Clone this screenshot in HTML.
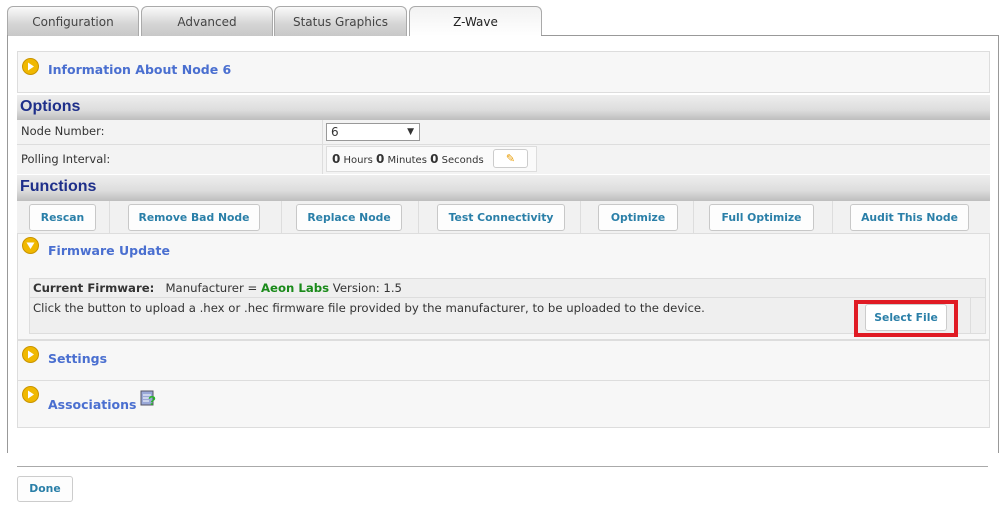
<!DOCTYPE html>
<html><head><style>
body{margin:0;width:1006px;height:512px;background:#fff;font-family:"DejaVu Sans","Liberation Sans",sans-serif;font-size:11.5px;color:#333;position:relative;overflow:hidden}
.a{position:absolute;box-sizing:border-box}
.tab{position:absolute;top:6px;height:30px;border:1px solid #aaa;border-bottom:none;border-radius:6px 6px 0 0;background:linear-gradient(#fafafa,#d4d4d4 60%,#c8c8c8);text-align:center;line-height:30px;font-size:12px;color:#444;box-sizing:border-box}
.hdr{position:absolute;left:17px;width:973px;background:linear-gradient(#eee,#ddd 60%,#bdbdbd);color:#1e2f8a;font-weight:bold;font-size:16px;font-family:"Liberation Sans",sans-serif;padding-left:3px;box-sizing:border-box}
.btn{position:absolute;top:204px;height:27px;border:1px solid #c8c8c8;border-radius:3px;background:#fdfdfd;color:#2a7fa8;font-weight:bold;text-align:center;line-height:25px;box-sizing:border-box;font-size:10.8px}
.sec{position:absolute;left:17px;width:973px;background:#f7f7f7;border:1px solid #ddd;box-sizing:border-box}
.ttl{position:absolute;left:30px;color:#4a6fd0;font-weight:bold;font-size:12.5px}
.ic{position:absolute;left:4px;width:17px;height:17px;border-radius:50%;background:#f0b800;border:1px solid #c99400;box-sizing:border-box}
</style></head><body>
<div class="tab" style="left:7px;width:132px">Configuration</div>
<div class="tab" style="left:141px;width:132px">Advanced</div>
<div class="tab" style="left:274px;width:133px">Status Graphics</div>
<div class="tab" style="left:409px;width:133px;background:linear-gradient(#f2f2f2,#fff);height:30px;color:#222">Z-Wave</div>
<div class="a" style="left:541px;top:35px;width:458px;height:1px;background:#999"></div>
<div class="a" style="left:7px;top:35px;width:1px;height:418px;background:#999"></div>
<div class="a" style="left:998px;top:35px;width:1px;height:418px;background:#999"></div>

<div class="sec" style="top:51px;height:42px"><div class="ic" style="top:6px"><svg width="15" height="15"><path d="M5 3.5L11 7.5 5 11.5z" fill="#fff"/></svg></div><div class="ttl" style="top:10px">Information About Node 6</div></div>

<div class="hdr" style="top:95px;height:25px;line-height:23px">Options</div>
<div class="a" style="left:17px;top:120px;width:973px;height:25px;background:#f3f3f3;border-bottom:1px solid #ddd"></div>
<div class="a" style="left:17px;top:145px;width:973px;height:29px;background:#f3f3f3"></div>
<div class="a" style="left:21px;top:124px">Node Number:</div>
<div class="a" style="left:21px;top:152px">Polling Interval:</div>
<div class="a" style="left:322px;top:120px;width:1px;height:54px;background:#ddd"></div>
<div class="a" style="left:326px;top:123px;width:94px;height:18px;border:1px solid #999;background:#fff;padding-left:4px;font-size:12px;line-height:16px">6<span style="position:absolute;right:5px;font-size:9px">▼</span></div>
<div class="a" style="left:326px;top:146px;width:211px;height:26px;border:1px solid #ddd;background:#fafafa;font-size:10px;line-height:24px;padding-left:5px"><b style="font-size:12px">0</b> Hours <b style="font-size:12px">0</b> Minutes <b style="font-size:12px">0</b> Seconds</div>
<div class="a" style="left:493px;top:149px;width:35px;height:19px;border:1px solid #ccc;border-radius:3px;background:#fff;color:#e89b00;text-align:center;font-size:11px;line-height:17px">✎</div>

<div class="hdr" style="top:175px;height:26px;line-height:23px">Functions</div>
<div class="a" style="left:17px;top:201px;width:973px;height:33px;background:#f1f1f1;border-bottom:1px solid #ddd"></div>
<div class="a" style="left:109px;top:201px;width:1px;height:33px;background:#ddd"></div>
<div class="a" style="left:281px;top:201px;width:1px;height:33px;background:#ddd"></div>
<div class="a" style="left:418px;top:201px;width:1px;height:33px;background:#ddd"></div>
<div class="a" style="left:580px;top:201px;width:1px;height:33px;background:#ddd"></div>
<div class="a" style="left:693px;top:201px;width:1px;height:33px;background:#ddd"></div>
<div class="a" style="left:832px;top:201px;width:1px;height:33px;background:#ddd"></div>
<div class="btn" style="left:29px;width:67px">Rescan</div>
<div class="btn" style="left:128px;width:132px">Remove Bad Node</div>
<div class="btn" style="left:296px;width:106px">Replace Node</div>
<div class="btn" style="left:437px;width:128px">Test Connectivity</div>
<div class="btn" style="left:598px;width:80px">Optimize</div>
<div class="btn" style="left:709px;width:105px">Full Optimize</div>
<div class="btn" style="left:850px;width:119px">Audit This Node</div>

<div class="sec" style="top:234px;height:106px;border-top:none"><div class="ic" style="top:3px"><svg width="15" height="15"><path d="M3.5 4.5L11.5 4.5 7.5 11z" fill="#fff"/></svg></div><div class="ttl" style="top:9px">Firmware Update</div>
<div class="a" style="left:11px;top:44px;width:957px;height:56px;border:1px solid #ddd;background:#efefef"></div>
<div class="a" style="left:11px;top:63px;width:957px;height:1px;background:#ddd"></div>
<div class="a" style="left:952px;top:64px;width:1px;height:36px;background:#ddd"></div>
<div class="a" style="left:15px;top:47px;font-size:11.7px"><b>Current Firmware:</b>&nbsp;&nbsp; Manufacturer = <b style="color:#1a8a1a">Aeon Labs</b> Version: 1.5</div>
<div class="a" style="left:15px;top:67px;font-size:11.7px">Click the button to upload a .hex or .hec firmware file provided by the manufacturer, to be uploaded to the device.</div>
<div class="a" style="left:836px;top:66px;width:104px;height:37px;border:4px solid #e01b24"></div>
<div class="a" style="left:847px;top:70px;width:82px;height:27px;border:1px solid #ccc;border-radius:3px;background:#fff;color:#2a7fa8;font-weight:bold;text-align:center;line-height:25px;font-size:10.8px">Select File</div>
</div>

<div class="sec" style="top:340px;height:41px"><div class="ic" style="top:5px"><svg width="15" height="15"><path d="M5 3.5L11 7.5 5 11.5z" fill="#fff"/></svg></div><div class="ttl" style="top:10px">Settings</div></div>
<div class="sec" style="top:381px;height:47px;border-top:none"><div class="ic" style="top:5px"><svg width="15" height="15"><path d="M5 3.5L11 7.5 5 11.5z" fill="#fff"/></svg></div><div class="ttl" style="top:16px">Associations</div>
<svg class="a" style="left:122px;top:9px" width="18" height="18"><rect x="1" y="1" width="12" height="14" fill="#9aa8d8" stroke="#556" stroke-width="1"/><path d="M3 5h8M3 8h8M3 11h6" stroke="#fff"/><text x="8" y="15" font-size="13" font-weight="bold" fill="#2bb52b" font-family="Liberation Sans">?</text></svg></div>

<div class="a" style="left:17px;top:466px;width:971px;height:1px;background:#aaa"></div>
<div class="a" style="left:17px;top:476px;width:56px;height:26px;border:1px solid #ccc;border-radius:3px;background:#fdfdfd;color:#2a7fa8;font-weight:bold;text-align:center;line-height:24px;font-size:10.8px">Done</div>
</body></html>
